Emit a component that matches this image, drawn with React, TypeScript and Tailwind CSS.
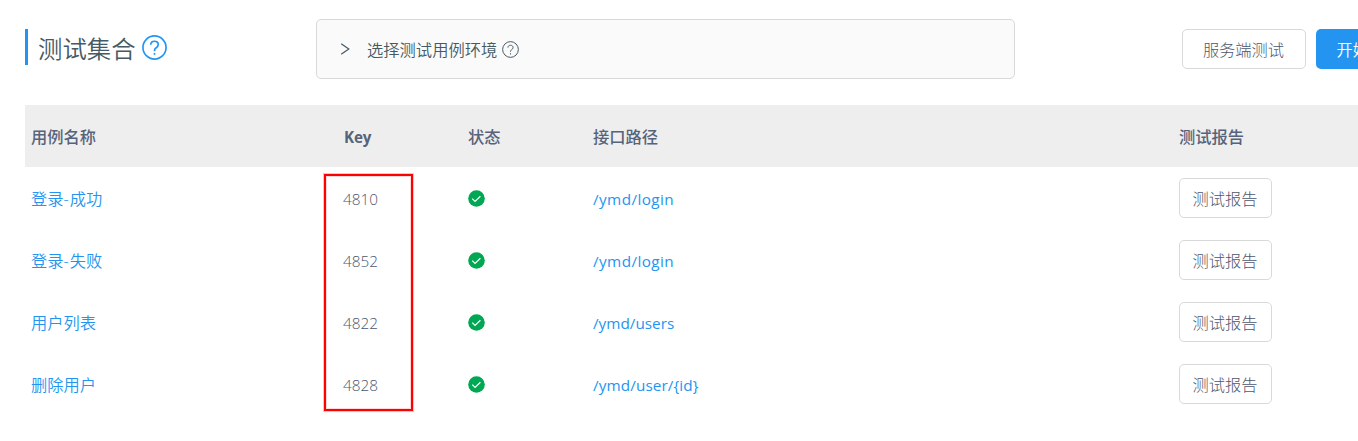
const CJK = "font-['Open_Sans','Noto_Sans_CJK_SC',sans-serif]";

type Row = { name: string; key: string; path: string; pathClass: string };

const rows: Row[] = [
  { name: '登录-成功', key: '4810', path: '/ymd/login', pathClass: 'tracking-[0.4px]' },
  { name: '登录-失败', key: '4852', path: '/ymd/login', pathClass: 'tracking-[0.4px]' },
  { name: '用户列表', key: '4822', path: '/ymd/users', pathClass: 'tracking-[0px]' },
  { name: '删除用户', key: '4828', path: '/ymd/user/{id}', pathClass: 'tracking-[0.1px]' },
];

function QuestionIcon({ className, stroke }: { className: string; stroke: number }) {
  return (
    <svg viewBox="0 0 24 24" fill="none" stroke="currentColor" strokeWidth={stroke} className={className}>
      <circle cx="12" cy="12" r="11.1" />
      <path d="M8.4 9.3C8.4 7.3 9.9 6 12 6s3.6 1.3 3.6 3.2c0 1.5-.9 2.3-2 3.1-1.1.7-1.6 1.3-1.6 2.5v.7" />
      <path d="M12 17.2v1.8" />
    </svg>
  );
}

function PassedIcon() {
  return (
    <svg viewBox="0 0 17 17" className="block h-[17px] w-[17px]">
      <circle cx="8.5" cy="8.5" r="8.3" fill="#00a854" />
      <path d="M4.3 8.7l2.7 2.7 5.4-5.2" fill="none" stroke="#fff" strokeWidth="1.2" />
    </svg>
  );
}

function Header() {
  return (
    <header className="flex h-[105px] items-start pl-[25px]">
      <div className="mt-[29px] flex h-9 w-[291px] shrink-0 items-center border-l-[3px] border-[#2395f1] pl-[10px] text-[#455a64]">
        <h2 className="relative top-[2px] text-[24.4px] leading-9 font-[350]">测试集合</h2>
        <QuestionIcon className="ml-[6px] h-[25px] w-[25px] text-[#2395f1]" stroke={1.6} />
      </div>
      <div className="mt-[19px] flex h-[60px] w-[699px] shrink-0 items-center rounded-[5px] border border-[#d9d9d9] bg-[#fafafa] pl-[23px] text-[#455a64]">
        <svg viewBox="0 0 11 12" className="h-3 w-[11px]" fill="none" stroke="currentColor" strokeWidth="1.2">
          <path d="M1.2 .8l7.6 5.2-7.6 5.2" />
        </svg>
        <span className="ml-4 pt-[2px] text-[16.3px] leading-6 font-[350]">选择测试用例环境</span>
        <QuestionIcon className="ml-[5px] h-[17px] w-[17px]" stroke={1.4} />
      </div>
      <div className="mt-[29px] ml-[167px] flex shrink-0 gap-[10px]">
        <button className="flex h-10 w-[124px] items-center justify-center rounded-[5px] border border-[#d9d9d9] bg-white pt-[2px] pr-px text-[16.25px]">
          服务端测试
        </button>
        <button className="flex h-10 w-[107px] items-center justify-center rounded-[5px] bg-[#2395f1] pt-[2px] pr-px text-[16.25px] font-[350] text-white">
          开始测试
        </button>
      </div>
    </header>
  );
}

export default function App() {
  return (
    <div className={`${CJK} relative h-[441px] w-full overflow-hidden bg-white text-[16.25px] font-light text-[#4d566e]`}>
      <Header />
      <main className="pl-[25px]">
        <div className="grid h-[62px] grid-cols-[312px_125px_125px_586px_1fr] items-center bg-[#eee] pt-[2px] font-medium text-[#56637b]">
          <div className="pl-[6px]">用例名称</div>
          <div className="pt-px pl-[7px] text-[15.2px] font-bold tracking-[-0.1px]">Key</div>
          <div className="pl-[6px]">状态</div>
          <div className="pl-[6px]">接口路径</div>
          <div className="pl-[6px]">测试报告</div>
        </div>
        {rows.map((row) => (
          <div key={row.key} className="grid h-[62px] grid-cols-[312px_125px_125px_586px_1fr] items-center">
            <a className="pt-[2px] pl-[6px] font-[350] text-[#2395f1]">
              {row.name.split('-').map((part, i) => (
                <span key={part}>
                  {i > 0 && <span className="tracking-[1px]">-</span>}
                  {part}
                </span>
              ))}
            </a>
            <div className="pt-[2px] pl-[6px] text-[15.3px] font-[350]">{row.key}</div>
            <div className="pl-[6px]">
              <PassedIcon />
            </div>
            <a className={`pt-[2px] pl-[6px] text-[15.3px] font-normal text-[#2395f1] ${row.pathClass}`}>{row.path}</a>
            <div className="pl-[6px]">
              <button className="flex h-10 w-[93px] items-center justify-center rounded-[5px] border border-[#d9d9d9] bg-white pt-[2px] pr-px">
                测试报告
              </button>
            </div>
          </div>
        ))}
      </main>
      <div className="absolute top-[174px] left-[324px] h-[237px] w-[89px] border-2 border-[#f00] shadow-[0_0_0_1px_rgba(255,0,0,0.25),inset_0_0_0_1px_rgba(255,0,0,0.15)]" />
    </div>
  );
}
